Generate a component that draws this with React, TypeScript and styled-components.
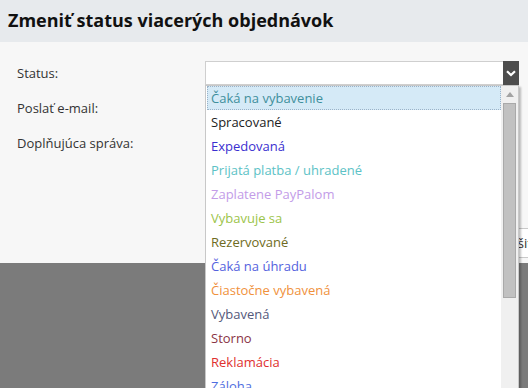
import { createGlobalStyle } from "styled-components";
import styled from "styled-components";

const GlobalStyle = createGlobalStyle`
  html, body {
    margin: 0;
    padding: 0;
    height: 100%;
    overflow: hidden;
    background: #7b7b7b;
    font-family: "Open Sans", "Liberation Sans", sans-serif;
  }
`;

const statuses: { label: string; color: string }[] = [
  { label: "Čaká na vybavenie", color: "#3f8f9c" },
  { label: "Spracované", color: "#222222" },
  { label: "Expedovaná", color: "#3a2fd0" },
  { label: "Prijatá platba / uhradené", color: "#5cc2c6" },
  { label: "Zaplatene PayPalom", color: "#c39ce8" },
  { label: "Vybavuje sa", color: "#9cc44a" },
  { label: "Rezervované", color: "#6e6b22" },
  { label: "Čaká na úhradu", color: "#5462de" },
  { label: "Čiastočne vybavená", color: "#f0913c" },
  { label: "Vybavená", color: "#54587a" },
  { label: "Storno", color: "#8a3345" },
  { label: "Reklamácia", color: "#e0302e" },
  { label: "Záloha", color: "#4f6ee0" },
];

const App = () => {
  return (
    <>
      <GlobalStyle />
      <Dialog>
        <Header>Zmeniť status viacerých objednávok</Header>
        <Body>
          <Row>
            <Label>Status:</Label>
            <SelectWrap>
              <SelectBox>
                <SelectValue />
                <SelectArrow>
                  <svg width="10" height="7" viewBox="0 0 10 7">
                    <path d="M1 1.2 L5 5 L9 1.2" stroke="#fff" strokeWidth="2.2" fill="none" />
                  </svg>
                </SelectArrow>
              </SelectBox>
              <Dropdown>
                <Options>
                  {statuses.map((s, i) => (
                    <Option key={s.label} $color={s.color} $active={i === 0}>
                      {s.label}
                    </Option>
                  ))}
                </Options>
                <Scrollbar>
                  <ScrollArrow>
                    <svg width="8" height="5" viewBox="0 0 8 5">
                      <path d="M0 5 L4 0 L8 5 Z" fill="#a3a3a3" />
                    </svg>
                  </ScrollArrow>
                  <ScrollTrack>
                    <ScrollThumb />
                  </ScrollTrack>
                  <ScrollArrow>
                    <svg width="8" height="5" viewBox="0 0 8 5">
                      <path d="M0 0 L8 0 L4 5 Z" fill="#505050" />
                    </svg>
                  </ScrollArrow>
                </Scrollbar>
              </Dropdown>
            </SelectWrap>
          </Row>
          <Row>
            <Label>Poslať e-mail:</Label>
          </Row>
          <Row>
            <Label>Doplňujúca správa:</Label>
          </Row>
          <Footer>
            <Button>Zrušiť</Button>
          </Footer>
        </Body>
      </Dialog>
    </>
  );
};

const Dialog = styled.div`
  width: 600px;
  background: #f7f7f7;
`;

const Header = styled.h2`
  margin: 0;
  height: 42px;
  box-sizing: border-box;
  padding: 8px 8px 0;
  background: #e7eaed;
  font-size: 18px;
  font-weight: 700;
  color: #111;
`;

const Body = styled.div`
  padding: 19px 0 5px 17px;
  display: flex;
  flex-direction: column;
`;

const Row = styled.div`
  display: flex;
  align-items: flex-start;
  height: 35px;
`;

const Label = styled.label`
  width: 188px;
  font-size: 13px;
  line-height: 24px;
  color: #333;
`;

const SelectWrap = styled.div`
  position: relative;
  width: 314px;
`;

const SelectBox = styled.div`
  display: flex;
  height: 24px;
  box-sizing: border-box;
  border: 1px solid #cfcfcf;
  background: #fff;
`;

const SelectValue = styled.div`
  flex: 1;
`;

const SelectArrow = styled.div`
  width: 16px;
  margin: -1px -1px -1px 0;
  background: #4d4d4d;
  display: flex;
  align-items: center;
  justify-content: center;
`;

const Dropdown = styled.div`
  position: absolute;
  top: 24px;
  left: 0;
  width: 314px;
  height: 320px;
  box-sizing: border-box;
  border: 1px solid #c8c8c8;
  background: #fff;
  display: flex;
  box-shadow: 2px 2px 2px rgba(0, 0, 0, 0.25);
  z-index: 5;
`;

const Options = styled.ul`
  list-style: none;
  margin: 0;
  padding: 0 0 0 1px;
  flex: 1;
  overflow: hidden;
`;

const Option = styled.li<{ $color: string; $active: boolean }>`
  height: 24px;
  box-sizing: border-box;
  padding-left: 3px;
  font-size: 13px;
  line-height: 22px;
  color: ${(p) => p.$color};
  border: 1px dotted ${(p) => (p.$active ? "#9bb3c9" : "transparent")};
  background: ${(p) => (p.$active ? "#d5eaf7" : "transparent")};
  white-space: nowrap;
`;

const Scrollbar = styled.div`
  width: 17px;
  background: #f0f0f0;
  display: flex;
  flex-direction: column;
`;

const ScrollArrow = styled.div`
  height: 17px;
  display: flex;
  align-items: center;
  justify-content: center;
`;

const ScrollTrack = styled.div`
  flex: 1;
  padding: 0 2px;
`;

const ScrollThumb = styled.div`
  height: 195px;
  background: #c1c1c1;
  border: 1px solid #a9a9a9;
  box-sizing: border-box;
`;

const Footer = styled.div`
  display: flex;
  padding: 62px 0 0 465px;
`;

const Button = styled.button`
  height: 30px;
  padding: 0 14px;
  font-family: inherit;
  font-size: 13px;
  color: #333;
  background: #fff;
  border: 1px solid #c9c9c9;
`;

export default App;
